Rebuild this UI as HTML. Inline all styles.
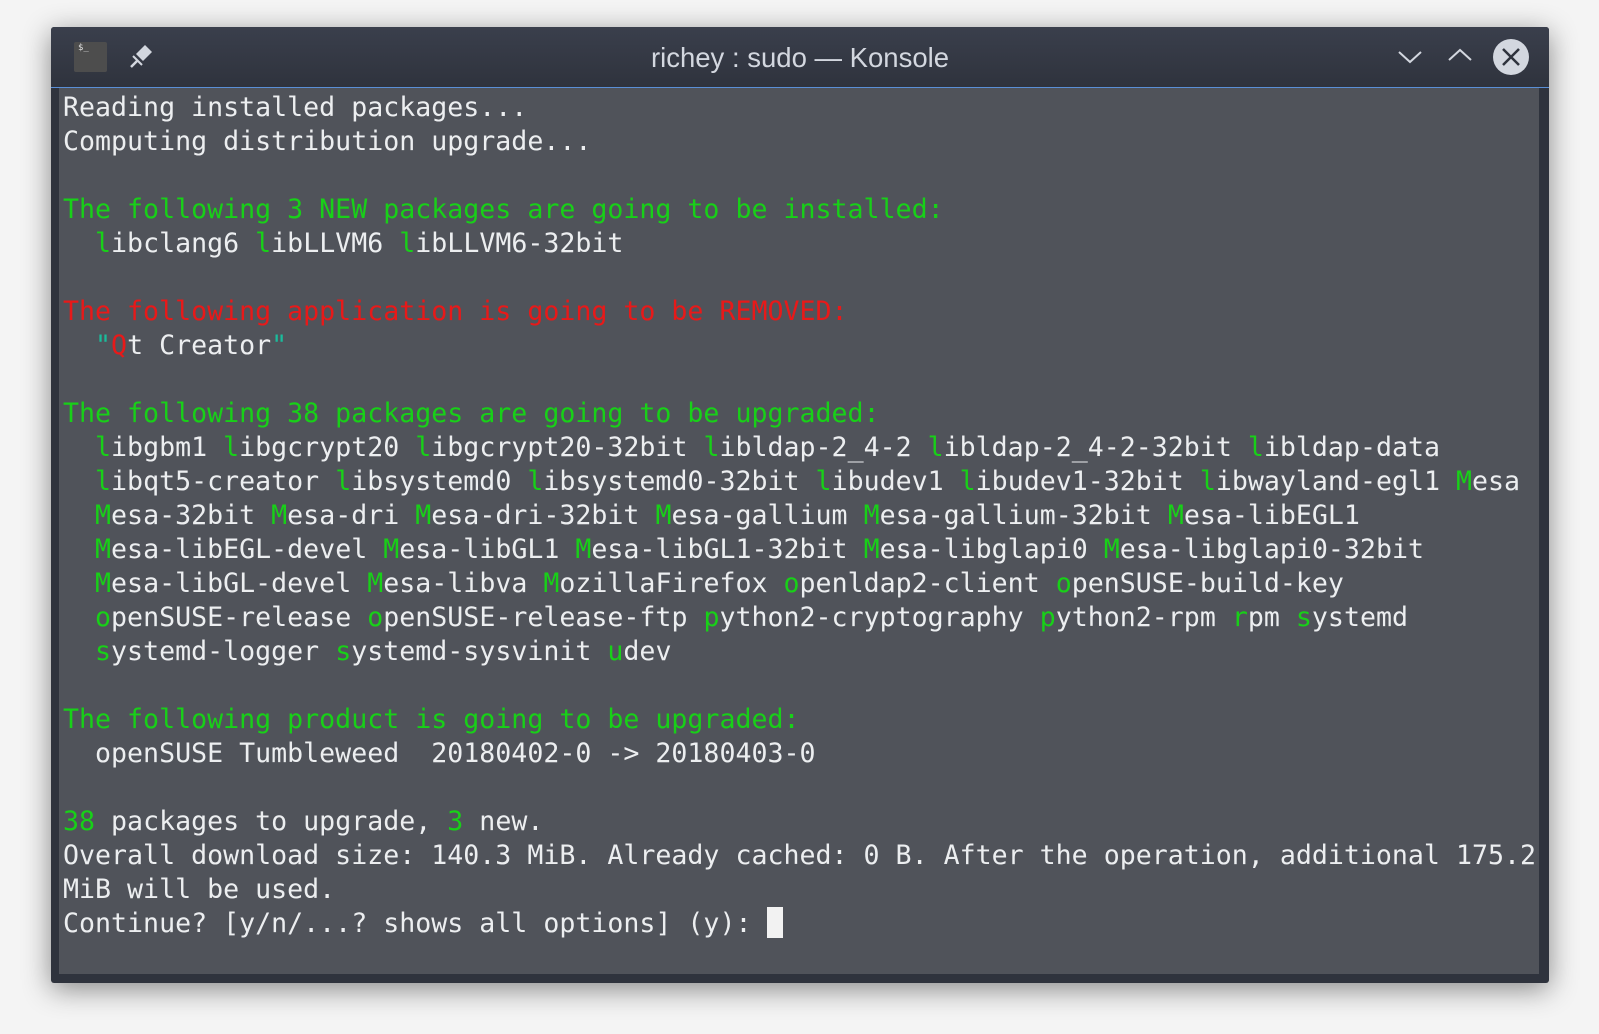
<!DOCTYPE html>
<html><head><meta charset="utf-8"><style>
html,body{margin:0;padding:0;width:1599px;height:1034px;background:#f4f4f4;overflow:hidden}
.win{position:absolute;left:51px;top:27px;width:1498px;height:956px;background:#2f333d;border-radius:3px;box-shadow:0 6px 28px rgba(0,0,0,.45)}
.tb{position:absolute;left:0;top:0;width:1498px;height:60px;background:linear-gradient(#3a3f4c,#2f333d);border-radius:3px 3px 0 0;border-bottom:1px solid #5a8fd6}
.title{position:absolute;left:0;right:0;top:15px;text-align:center;font:27.5px "Liberation Sans",sans-serif;color:#d3d7df}
.term{position:absolute;left:8px;top:61px;width:1480px;height:886px;background:#50535a}
pre{margin:0;position:absolute;left:4px;top:3px;font:26.6px/34px "DejaVu Sans Mono","Liberation Mono",monospace;color:#eceef0;letter-spacing:0}
.g{color:#18d018}.r{color:#e81919}.c{color:#1abc9c}
.cur{display:inline-block;width:16px;height:31px;background:#f2f2f2;vertical-align:-6px}
</style></head><body>
<div class="win">
<div class="tb">
<div style="position:absolute;left:23px;top:15px;width:33px;height:30px;background:#4d4d4d;border-radius:2px"><div style="position:absolute;left:4px;top:1px;color:#ddd;font:9px monospace">$_</div></div>
<svg style="position:absolute;left:78px;top:16px" width="26" height="26" viewBox="0 0 26 26"><path d="M16 2l7 7-9 9-7-7z" fill="#d3d7df"/><path d="M4 13l9 9" stroke="#d3d7df" stroke-width="2"/><path d="M8 18l-6 6" stroke="#d3d7df" stroke-width="2.5"/></svg>
<div class="title">richey : sudo — Konsole</div>
<svg style="position:absolute;left:1346px;top:20px" width="26" height="20"><path d="M2 5l11 10 11-10" stroke="#d3d7df" stroke-width="2" fill="none"/></svg>
<svg style="position:absolute;left:1396px;top:18px" width="26" height="20"><path d="M2 15l11-10 11 10" stroke="#d3d7df" stroke-width="2" fill="none"/></svg>
<svg style="position:absolute;left:1441px;top:11px" width="38" height="38"><circle cx="19" cy="19" r="18" fill="#d3d7df"/><path d="M11 11l16 16M27 11l-16 16" stroke="#2f333d" stroke-width="2.5"/></svg>
</div>
<div class="term"><pre>Reading installed packages...
Computing distribution upgrade...

<span class="g">The following 3 NEW packages are going to be installed:</span>
  <span class="g">l</span>ibclang6 <span class="g">l</span>ibLLVM6 <span class="g">l</span>ibLLVM6-32bit

<span class="r">The following application is going to be REMOVED:</span>
  <span class="c">"</span><span class="r">Q</span>t Creator<span class="c">"</span>

<span class="g">The following 38 packages are going to be upgraded:</span>
  <span class="g">l</span>ibgbm1 <span class="g">l</span>ibgcrypt20 <span class="g">l</span>ibgcrypt20-32bit <span class="g">l</span>ibldap-2_4-2 <span class="g">l</span>ibldap-2_4-2-32bit <span class="g">l</span>ibldap-data
  <span class="g">l</span>ibqt5-creator <span class="g">l</span>ibsystemd0 <span class="g">l</span>ibsystemd0-32bit <span class="g">l</span>ibudev1 <span class="g">l</span>ibudev1-32bit <span class="g">l</span>ibwayland-egl1 <span class="g">M</span>esa
  <span class="g">M</span>esa-32bit <span class="g">M</span>esa-dri <span class="g">M</span>esa-dri-32bit <span class="g">M</span>esa-gallium <span class="g">M</span>esa-gallium-32bit <span class="g">M</span>esa-libEGL1
  <span class="g">M</span>esa-libEGL-devel <span class="g">M</span>esa-libGL1 <span class="g">M</span>esa-libGL1-32bit <span class="g">M</span>esa-libglapi0 <span class="g">M</span>esa-libglapi0-32bit
  <span class="g">M</span>esa-libGL-devel <span class="g">M</span>esa-libva <span class="g">M</span>ozillaFirefox <span class="g">o</span>penldap2-client <span class="g">o</span>penSUSE-build-key
  <span class="g">o</span>penSUSE-release <span class="g">o</span>penSUSE-release-ftp <span class="g">p</span>ython2-cryptography <span class="g">p</span>ython2-rpm <span class="g">r</span>pm <span class="g">s</span>ystemd
  <span class="g">s</span>ystemd-logger <span class="g">s</span>ystemd-sysvinit <span class="g">u</span>dev

<span class="g">The following product is going to be upgraded:</span>
  openSUSE Tumbleweed  20180402-0 -&gt; 20180403-0

<span class="g">38</span> packages to upgrade, <span class="g">3</span> new.
Overall download size: 140.3 MiB. Already cached: 0 B. After the operation, additional 175.2
MiB will be used.
Continue? [y/n/...? shows all options] (y): <span class="cur"></span></pre></div>
</div>
</body></html>
